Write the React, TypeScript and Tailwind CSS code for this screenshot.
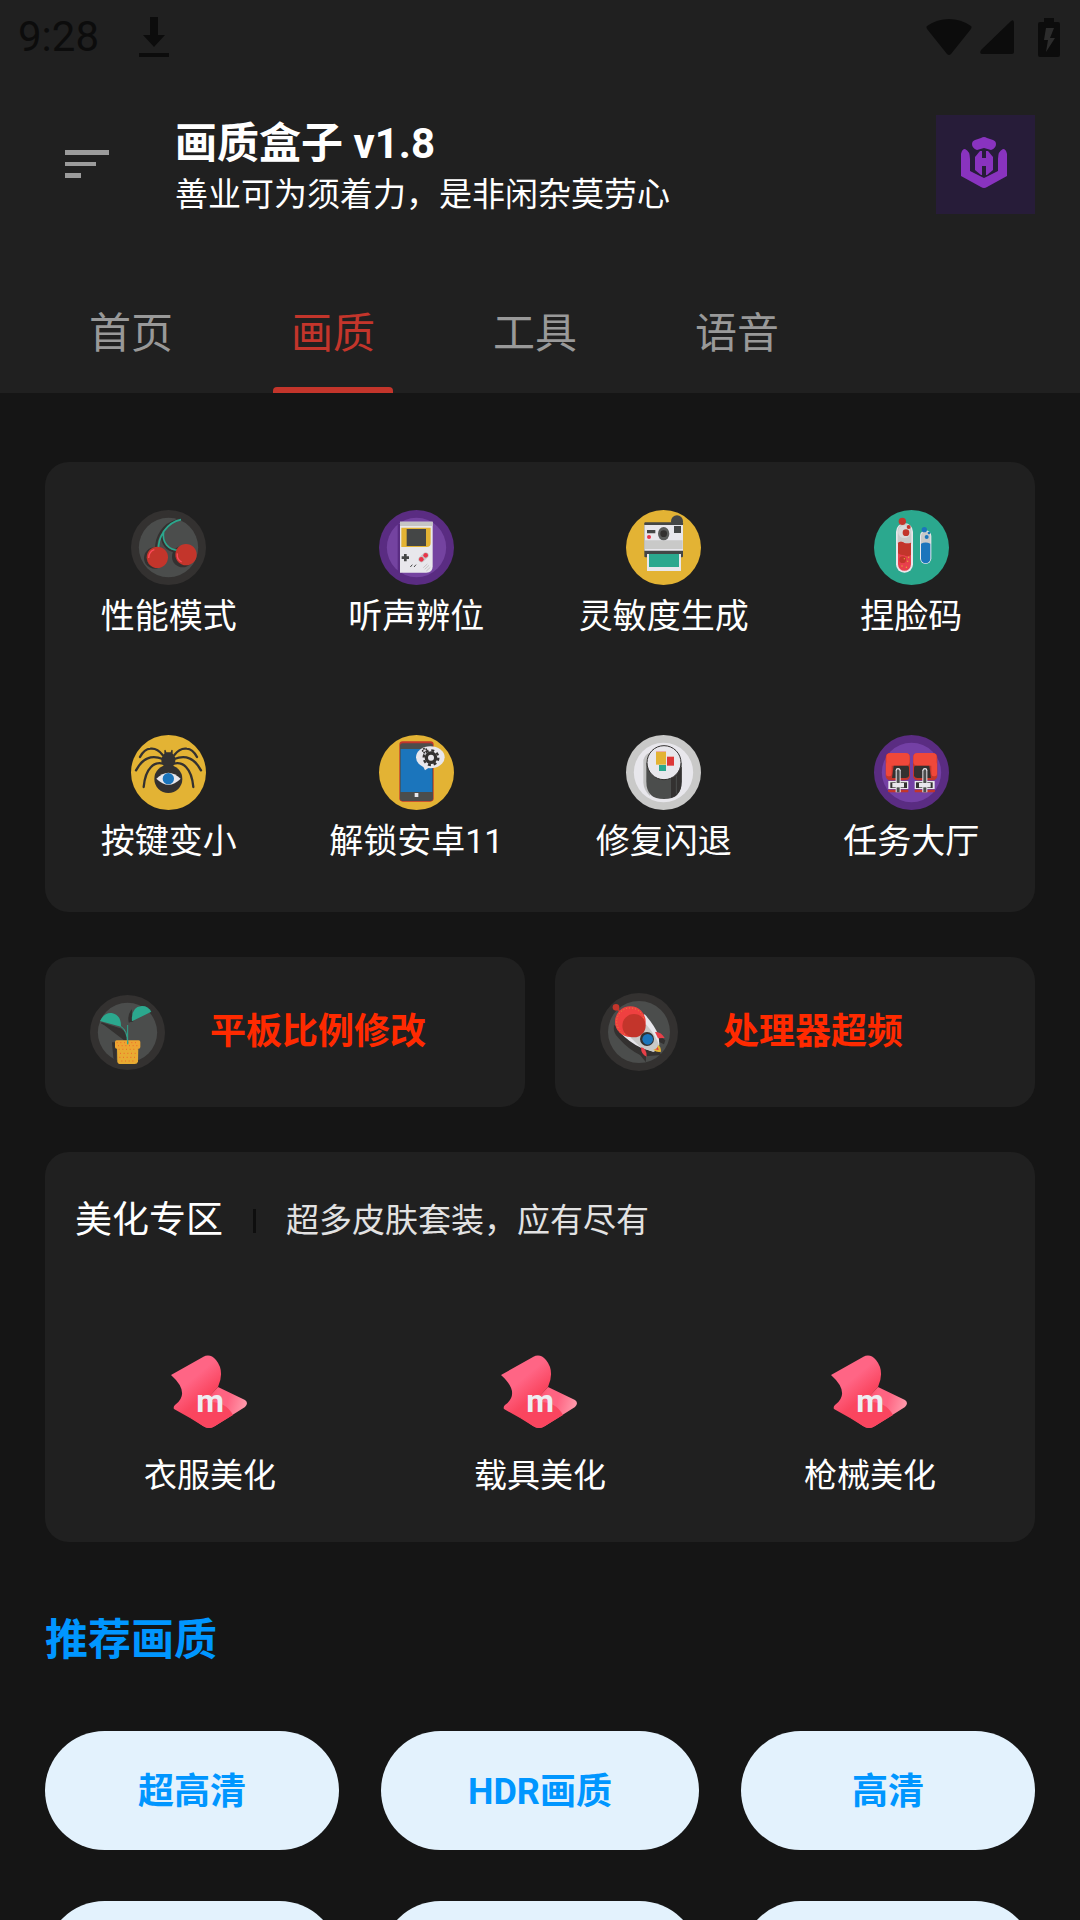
import type { ReactNode } from "react";
import clsx from "clsx";

const RED = "#c3352b";
const YELLOW = "#e3b334";
const TEAL = "#2ba88e";
const BLUE = "#1b75bc";
const DARK = "#333130";
const GREY = "#4b4d4c";
const PAPER = "#e8e7ec";
const PURPLE = "#5a2c82";

const Badge = ({ fill, inner, children }: { fill: string; inner?: string; children: ReactNode }) => (
  <svg viewBox="0 0 225 225" className="size-[75px]" aria-hidden="true">
    <circle cx="112.5" cy="112.5" r="112.5" fill={fill} />
    {inner && <circle cx="112.5" cy="112.5" r="89" fill={inner} />}
    {children}
  </svg>
);

const CherryIcon = () => (
  <Badge fill={DARK} inner={GREY}>
    <path d="M140 30C96 42 73 80 75 122M92 66C90 100 106 122 136 126" fill="none" stroke={DARK} strokeWidth="6" />
    <circle cx="71" cy="144" r="32" fill={DARK} />
    <circle cx="155" cy="140" r="32" fill={DARK} />
    <path d="M150 29C106 38 81 80 82 122M98 64C92 96 112 122 147 121" fill="none" stroke={TEAL} strokeWidth="5" />
    <circle cx="79" cy="142" r="32" fill={RED} />
    <circle cx="165" cy="134" r="32" fill={RED} />
    <path d="M53 144Q54 124 70 119M139 130Q136 148 152 156" fill="none" stroke="#ff4a5a" strokeWidth="4" />
  </Badge>
);

const GameIcon = () => (
  <Badge fill={PURPLE} inner="#7443a0">
    <path d="M56 42h16v146H56z" fill={PURPLE} />
    <path d="M63 35h98v134q0 19-19 19H63z" fill={PAPER} />
    <path d="M63 35h98v13H63z" fill="#c5c5c5" />
    <path d="M67 53h88v46q0 12-12 12H67z" fill={YELLOW} />
    <path d="M83 57h58v51H83z" fill="#444646" />
    <path d="M75 132h8v7h7v8h-7v7h-8v-7h-7v-8h7z" fill="#444646" />
    <path d="M127 148l13-12" stroke="#c5c5c5" strokeWidth="18" strokeLinecap="round" />
    <circle cx="127" cy="148" r="7" fill="#e8354a" />
    <circle cx="140" cy="136" r="7" fill="#e8354a" />
    <path d="M94 171l6-7M105 171l6-7" stroke="#444646" strokeWidth="3" />
    <path d="M133 173l12-11M137 178l13-12M142 183l12-11" stroke="#c5c5c5" strokeWidth="3" />
  </Badge>
);

const CameraIcon = () => (
  <Badge fill={YELLOW}>
    <circle cx="153" cy="34" r="18" fill="#444646" />
    <rect x="55" y="37" width="116" height="105" rx="3" fill="#444646" />
    <path d="M55 45h116v77H55z" fill={PAPER} />
    <path d="M57 91h113v26H57z" fill="#c9c9c8" />
    <path d="M144 48h21v21h-21zM63 60h25v10H63z" fill="#444646" />
    <ellipse cx="113" cy="71" rx="17" ry="20" fill="#5a5c5b" />
    <circle cx="113" cy="71" r="10" fill={DARK} />
    <circle cx="69" cy="81" r="6" fill="#e8354a" />
    <path d="M63 132h102v51H63z" fill={PAPER} />
    <path d="M69 132h90v39H69z" fill={TEAL} />
  </Badge>
);

const TubesIcon = () => (
  <Badge fill={TEAL}>
    <rect x="66" y="40" width="51" height="148" rx="25" fill={PAPER} />
    <path d="M71 62a20 20 0 0 1 41 0v40H71z" fill="#c9c9c8" />
    <circle cx="91" cy="65" r="19" fill="#d9d9da" />
    <path d="M72 99q8-7 19 0 10 4 20-1v65a19 19 0 0 1-39 0z" fill="#e8404c" />
    <path d="M72 99q8-7 19 0 10 4 20-1v36q-9 8-20 2-12 0-19-6z" fill={RED} />
    <circle cx="86" cy="149" r="10" fill={RED} />
    <path d="M91 144v4M101 152v4M84 166v4M97 170v4M104 140v4" stroke={YELLOW} strokeWidth="3" />
    <circle cx="85" cy="34" r="11" fill={RED} />
    <circle cx="104" cy="51" r="6" fill={RED} />
    <circle cx="96" cy="68" r="10" fill={RED} />
    <rect x="138" y="61" width="34" height="101" rx="17" fill={PAPER} />
    <path d="M141 78a14 14 0 0 1 28 0v25h-28z" fill="#c9c9c8" />
    <path d="M141 101q14-7 28 0v45a14 14 0 0 1-28 0z" fill={BLUE} />
    <circle cx="151" cy="59" r="8" fill={BLUE} />
    <circle cx="158" cy="81" r="6" fill={BLUE} />
    <circle cx="165" cy="69" r="4" fill={BLUE} />
  </Badge>
);

const SpiderLegs = () => (
  <path
    d="M95 60Q78 38 58 41Q40 42 27 66M95 72Q70 62 50 70Q32 76 15 106M97 86Q75 80 60 96Q42 114 38 156"
    fill="none"
    stroke={DARK}
    strokeWidth="7"
    strokeLinecap="round"
  />
);

const SpiderIcon = () => (
  <Badge fill={YELLOW}>
    <SpiderLegs />
    <g transform="translate(225 0) scale(-1 1)">
      <SpiderLegs />
    </g>
    <path d="M100 46q4-6 6 6h13q2-12 6-6v10q9 8 8 22-2 12-8 16h-26q-7-6-8-16 0-14 9-22z" fill={DARK} />
    <circle cx="112" cy="132" r="42" fill={DARK} />
    <path d="M76 131q36-36 73 0-36 36-73 0z" fill={PAPER} />
    <circle cx="112" cy="131" r="17" fill={BLUE} />
  </Badge>
);

const PhoneIcon = () => (
  <Badge fill={YELLOW}>
    <rect x="61" y="19" width="103" height="181" rx="10" fill={RED} />
    <rect x="63" y="25" width="99" height="173" rx="8" fill={GREY} />
    <path d="M65 42h95v129H65z" fill={BLUE} />
    <path d="M107 174h11v12h-11z" fill={PAPER} />
    <ellipse cx="154" cy="67" rx="43" ry="33" fill={PAPER} />
    <path d="M132 94l26-2-20 14z" fill={PAPER} />
    <circle cx="156" cy="68" r="22" fill="none" stroke={DARK} strokeWidth="7" strokeDasharray="9 8.3" />
    <circle cx="156" cy="68" r="14" fill="none" stroke={DARK} strokeWidth="10" />
    <circle cx="137" cy="47" r="6" fill="none" stroke={DARK} strokeWidth="5" strokeDasharray="5 2" />
  </Badge>
);

const SushiIcon = () => (
  <Badge fill="#c9c9c8" inner={PAPER}>
    <path d="M52 75q6-20 20-22v130q-18-16-20-40z" fill="#c0c0c0" />
    <path d="M61 83h106v57q0 52-53 52t-53-52z" fill={GREY} />
    <path d="M135 120l32-25v45q0 38-32 49z" fill={DARK} />
    <path d="M151 122v54" stroke={GREY} strokeWidth="3" />
    <circle cx="114" cy="83" r="51" fill={PAPER} stroke={DARK} strokeWidth="3" />
    <path d="M90 50h30v39H90z" fill={YELLOW} />
    <path d="M90 48h30v3H90zM123 63h21v3h-21z" fill="#e9b0ac" />
    <path d="M123 66h21v26h-21z" fill="#dd3737" />
    <path d="M99 90h21v18H99z" fill={TEAL} />
  </Badge>
);

const Pack = () => (
  <>
    <rect x="35" y="54" width="73" height="82" rx="14" fill={RED} />
    <rect x="37" y="54" width="70" height="38" rx="12" fill="#f0483a" />
    <rect x="36" y="80" width="17" height="44" rx="7" fill="#f0483a" />
    <path d="M59 92h41q5 0 5 5v26q-3 6-10 6H54z" fill={DARK} />
    <path d="M42 164h61v6q0 2-4 2H46q-4 0-4-4z" fill={RED} />
    <path d="M43 138h60v24H43z" fill={PAPER} />
    <path d="M49 142h50v17H49z" fill={DARK} />
    <path d="M65 172v-66q0-7 7-7t8 7v66z" fill={PAPER} />
    <path d="M68 172v-64q0-5 4-5t5 5v64z" fill={GREY} />
    <path d="M55 144h35v13H55z" fill={PAPER} />
  </>
);

const PacksIcon = () => (
  <Badge fill={PURPLE} inner="#7440a5">
    <Pack />
    <g transform="translate(225 0) scale(-1 1)">
      <Pack />
    </g>
  </Badge>
);

const PlantIcon = () => (
  <Badge fill={DARK} inner={GREY}>
    <path d="M34 84L92 102Q108 112 108 140M118 82q-4-20 6-34l4 32M68 144h10v50l-6-6z" stroke={DARK} strokeWidth="4" fill={DARK} />
    <path d="M92 94q21 12 21 52M113 90v56" stroke={TEAL} strokeWidth="3" fill="none" />
    <path d="M30 78Q43 52 65 54Q94 60 93 95Z" fill={TEAL} />
    <path d="M126 79Q122 36 155 33Q174 32 184 50Z" fill={TEAL} />
    <path d="M81 155h64l-1 45q-2 7-10 7H92q-9 0-10-7z" fill="#e8ab32" />
    <rect x="75" y="136" width="76" height="25" rx="5" fill="#eda532" />
    <path d="M80 143h66M84 152h62M86 163h56M90 175h50M88 187h50M94 198h40" stroke="#f0662c" strokeWidth="3" strokeDasharray="3 8" />
    <path d="M113 136v12" stroke={TEAL} strokeWidth="4" />
  </Badge>
);

const RocketIcon = () => (
  <svg viewBox="0 0 234 234" className="size-[78px]" aria-hidden="true">
    <circle cx="117" cy="117" r="117" fill={DARK} />
    <circle cx="117" cy="117" r="93" fill={GREY} />
    <path d="M42 96q-4 24 14 40 30 34 64 50l18 22v-18l46-4-14-24z" fill={DARK} />
    <path d="M178 128l18 14-4 12-16-8z" fill={DARK} />
    <path d="M48 43l16 18" stroke={RED} strokeWidth="5" />
    <circle cx="48" cy="43" r="10" fill={RED} />
    <path d="M58 116Q88 148 123 164L160 176Q176 172 178 155L176 128Q162 94 134 64Z" fill={PAPER} />
    <path d="M90 132L138 94Q168 128 177 156 174 172 160 176L123 164Z" fill="#c9c9c8" />
    <path d="M160 170q12-2 14-14 9 4 9 20-12 4-23-6z" fill={YELLOW} />
    <path d="M165 169q7-1 8-8l3 10z" fill="#e8354a" />
    <circle cx="91" cy="86" r="46" fill="#ef4040" />
    <circle cx="91" cy="86" r="41" fill="none" stroke={YELLOW} strokeWidth="3" strokeDasharray="2 7" />
    <circle cx="102" cy="98" r="35" fill={RED} />
    <circle cx="141" cy="138" r="21" fill={DARK} />
    <circle cx="143" cy="139" r="16" fill={BLUE} />
    <path d="M165 117q18-2 29 18l-20 1zM123 163q17 2 17 28-17-6-17-28z" fill="#e83f48" />
  </svg>
);

const SkinIcon = () => (
  <svg viewBox="0 0 80 73" className="h-[73px] w-20" aria-hidden="true">
    <defs>
      <linearGradient id="skin-top" x1="0.3" y1="0.2" x2="0.7" y2="0.8">
        <stop offset="0.3" stopColor="#ff6585" />
        <stop offset="0.8" stopColor="#fa4660" />
      </linearGradient>
      <linearGradient id="skin-side" x1="0" y1="0" x2="1" y2="0.2">
        <stop offset="0.3" stopColor="#fb4a66" />
        <stop offset="0.5" stopColor="#ff6482" />
        <stop offset="0.7" stopColor="#ff6482" />
        <stop offset="1" stopColor="#ff95a8" />
      </linearGradient>
    </defs>
    <path d="M48 32L75 45Q79 48 75 52L45 71Q39 75 33 71L20 62Z" fill="url(#skin-side)" />
    <path d="M1 20L33 2Q40-2 46 5Q55 16 48 32L20 63L4 54Q3 52 5 50Q21 38 1 20Z" fill="url(#skin-top)" />
    <path d="M20 63Q27 48 40 47Q56 47 63 60L45 71Q39 75 33 71Z" fill="#fa455f" />
    <text x="40" y="57" textAnchor="middle" fontSize="32" fontWeight="700" fill="#eeeef2" fontFamily="Roboto, sans-serif">
      m
    </text>
  </svg>
);

const tabs = ["首页", "画质", "工具", "语音"];

const tools = [
  { label: "性能模式", icon: CherryIcon },
  { label: "听声辨位", icon: GameIcon },
  { label: "灵敏度生成", icon: CameraIcon },
  { label: "捏脸码", icon: TubesIcon },
  { label: "按键变小", icon: SpiderIcon },
  { label: "解锁安卓11", icon: PhoneIcon },
  { label: "修复闪退", icon: SushiIcon },
  { label: "任务大厅", icon: PacksIcon },
];

const shortcuts = [
  { label: "平板比例修改", icon: PlantIcon },
  { label: "处理器超频", icon: RocketIcon },
];

const skins = ["衣服美化", "载具美化", "枪械美化"];

const presets = ["超高清", "HDR画质", "高清", "", "", ""];

const StatusBar = () => (
  <div className="flex h-[74px] items-center justify-between pr-5 pl-[18px] text-[#0c0c0c]">
    <div className="flex items-center gap-10">
      <span className="text-[42px] leading-[48px]">9:28</span>
      <svg viewBox="0 0 30 40" className="h-10 w-[30px]" fill="currentColor" aria-hidden="true">
        <path d="M11 0h8v18h7L15 30 4 18h7zM0 36h30v4H0z" />
      </svg>
    </div>
    <div className="flex items-center gap-2">
      <svg viewBox="0 0 46 36" className="h-9 w-[46px]" fill="currentColor" aria-hidden="true">
        <path d="M1 7Q11 0 23 0t22 7q1 1 0 3L25 35q-2 2-4 0L1 10Q0 8 1 7z" />
      </svg>
      <svg viewBox="0 0 34 34" className="size-[34px]" fill="currentColor" aria-hidden="true">
        <path d="M31 1q3-2 3 2v29q0 2-2 2H2q-3 0-1-4z" />
      </svg>
      <svg viewBox="0 0 22 39" className="ml-4 h-[39px] w-[22px]" fill="currentColor" aria-hidden="true">
        <path d="M6 0h10v4h4q2 0 2 2v31q0 2-2 2H2q-2 0-2-2V6q0-2 2-2h4z" />
        <path d="M8 10h8l-4 10h5L8 34l2-12H6z" fill="#2c2c2c" />
      </svg>
    </div>
  </div>
);

const Header = () => (
  <header className="shrink-0 bg-[#202020]">
    <StatusBar />
    <div className="flex h-[180px] items-center pr-[45px] pl-[65px]">
      <button type="button" aria-label="菜单" className="text-[#9b9b9b]">
        <svg viewBox="0 0 44 28" className="h-7 w-11" fill="currentColor" aria-hidden="true">
          <path d="M0 0h44v5H0zM0 12h31v4H0zM0 23h16v5H0z" />
        </svg>
      </button>
      <div className="ml-[66px] flex-1 pt-[6px] text-white">
        <h1 className="text-[42px] leading-[56px] font-bold">画质盒子 v1.8</h1>
        <p className="text-[33px] leading-[46px]">善业可为须着力，是非闲杂莫劳心</p>
      </div>
      <svg viewBox="0 0 99 99" className="size-[99px]" aria-hidden="true">
        <path d="M0 0h99v99H0z" fill="#271c39" />
        <g fill="#8933bf">
          <path d="M36 29q0-3 3-4l6-2q3-2 6 0l6 2q3 1 3 4 0 4-5 6l-7-2-7 2q-5-2-5-6z" />
          <path d="M25 39q1-5 4-5 5 2 5 10v12l14 7 14-7V44q0-8 5-10 3 0 4 5v22L51 72q-3 2-6 0L25 61z" />
          <path d="M39 42l5-6h8l5 6v13l-6 5h-6l-6-5z" />
        </g>
        <path d="M46 35h4v8h-4zM46 51h4v10h-4z" fill="#271c39" />
      </svg>
    </div>
    <nav className="mt-[19px] flex pl-[30px]">
      {tabs.map((tab, index) => (
        <button
          key={tab}
          type="button"
          aria-current={index === 1 ? "page" : undefined}
          className={clsx(
            "flex h-[120px] w-[202px] flex-col items-center justify-between pt-[34px] text-[42px] leading-[54px]",
            index === 1 ? "text-[#c3352b]" : "text-[#999999]"
          )}
        >
          {tab}
          {index === 1 && <span className="h-[6px] w-[120px] rounded-t-sm bg-[#c3352b]" />}
        </button>
      ))}
    </nav>
  </header>
);

export default function App() {
  return (
    <div className="flex h-screen flex-col bg-[#151515] font-[Roboto,'Noto_Sans_CJK_SC',sans-serif]">
      <Header />

      <main className="min-h-0 flex-1 overflow-y-auto px-[45px] pt-[69px] [scrollbar-width:none]">
        {/* Tools */}
        <section className="grid grid-cols-4 rounded-3xl bg-[#202020]">
          {tools.map(({ label, icon: Icon }) => (
            <button key={label} type="button" className="flex flex-col items-center gap-[7px] pt-12 pb-[47px] text-[34px] leading-[48px] text-white">
              <Icon />
              {label}
            </button>
          ))}
        </section>

        {/* Shortcuts */}
        <section className="mt-[45px] grid grid-cols-2 gap-[30px]">
          {shortcuts.map(({ label, icon: Icon }) => (
            <button
              key={label}
              type="button"
              className="flex h-[150px] items-center gap-[45px] rounded-3xl bg-[#202020] px-[45px] text-[36px] leading-[48px] font-bold text-[#ff2a00]"
            >
              <Icon />
              {label}
            </button>
          ))}
        </section>

        {/* Skins */}
        <section className="mt-[45px] rounded-3xl bg-[#202020] pt-[42px] pb-[42px]">
          <div className="flex items-center px-[30px]">
            <h2 className="text-[37px] leading-[54px] text-white">美化专区</h2>
            <span className="mx-[30px] h-6 w-[3px] bg-[#0e0e0e]" />
            <p className="text-[33px] leading-[54px] text-[#e2e2e2]">超多皮肤套装，应有尽有</p>
          </div>
          <div className="mt-[107px] grid grid-cols-3">
            {skins.map((label) => (
              <button key={label} type="button" className="flex flex-col items-center gap-6 text-[33px] leading-[48px] text-white">
                <SkinIcon />
                {label}
              </button>
            ))}
          </div>
        </section>

        {/* Presets */}
        <h2 className="mt-[70px] text-[43px] leading-[56px] font-bold text-[#0096ff]">推荐画质</h2>
        <section className="mt-[63px] grid grid-cols-[294fr_318fr_294fr] gap-x-[42px] gap-y-[51px] pb-[51px]">
          {presets.map((label, index) => (
            <button
              key={index}
              type="button"
              aria-label={label || "画质选项"}
              className="h-[119px] rounded-full bg-[#e3f2fd] pt-[2px] text-[36px] leading-[48px] font-bold text-[#0096ff]"
            >
              {label}
            </button>
          ))}
        </section>
      </main>
    </div>
  );
}
